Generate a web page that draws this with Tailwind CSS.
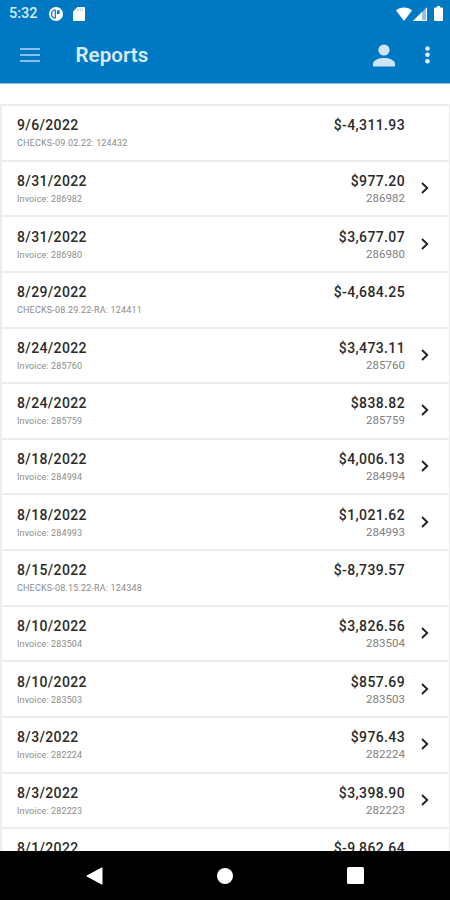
<!DOCTYPE html>
<html lang="en">
<head>
<meta charset="utf-8">
<title>Reports</title>
<script src="https://cdn.jsdelivr.net/npm/@tailwindcss/browser@4"></script>
</head>
<body class="bg-white font-[Roboto,sans-serif]">
<div class="w-[450px] h-[900px] flex flex-col overflow-hidden bg-white">
  <header class="h-[84px] shrink-0 bg-[#0079c4] border-b border-[#8fc0e4]">
    <div class="h-[27px] flex items-center pl-[9px] pr-[7px] text-white">
      <span class="w-[40px] text-[14.5px] leading-[27px] font-medium text-[#d9ebfa]">5:32</span>
      <svg class="w-[14px] h-[14px]" viewBox="0 0 14 14"><circle cx="7" cy="7" r="7" fill="#fff"/><path d="M6.300 3C3.800 3 2.600 5 2.600 7s1.200 4 3.700 4z" fill="none" stroke="#0079c4" stroke-width="1.200"/><path d="M8 3.300h2.600V7H8z" fill="#0079c4"/></svg>
      <svg class="ml-[10px] w-[12px] h-[14px]" viewBox="0 0 12 14"><path d="M4.500 0H11a1 1 0 0 1 1 1v12a1 1 0 0 1-1 1H1a1 1 0 0 1-1-1V4.500z" fill="#fff"/><path d="M5 1.500V4M7.300 1.500V4M9.600 1.500V4" stroke="#0079c4" stroke-opacity=".4" stroke-width="1"/></svg>
      <div class="ml-auto flex items-center">
        <svg class="w-[16px] h-[14px]" viewBox="0 0 16 14"><path d="M8 14 0 3.400C2 1.500 4.800 .4 8 .4s6 1.100 8 3z" fill="#fff"/></svg>
        <svg class="ml-[1px] w-[14px] h-[14px]" viewBox="0 0 14 14"><path d="M14 0v14H0z" fill="#fff" fill-opacity=".55"/><path d="M9 5v9H0z" fill="#fff"/><path d="M13.500 1v12.500H.8" fill="none" stroke="#fff"/></svg>
        <svg class="ml-[7px] w-[9px] h-[15px]" viewBox="0 0 9 15"><path d="M3 0h3v1.500h2a1 1 0 0 1 1 1V14a1 1 0 0 1-1 1H1a1 1 0 0 1-1-1V2.500a1 1 0 0 1 1-1h2z" fill="#fff"/></svg>
      </div>
    </div>
    <div class="h-[56px] flex items-center pl-5 pr-[20px]">
      <svg class="w-[20px] h-[14px]" viewBox="0 0 20 14"><path d="M0 1h20M0 7h20M0 13h20" stroke="#86c1e9" stroke-width="1.800"/></svg>
      <h1 class="ml-[35.500px] text-[20.500px] leading-[28px] font-semibold text-[#d9ebfa] tracking-[0.05px]">Reports</h1>
      <svg class="ml-auto w-[22px] h-[23px]" viewBox="0 0 22 23"><circle cx="11" cy="6" r="5.600" fill="#cfe4f7"/><path d="M0 22.500v-2.700C0 16 6.500 14 11 14s11 2 11 5.800v2.700z" fill="#cfe4f7"/></svg>
      <svg class="ml-[30px] w-[5px] h-[18px]" viewBox="0 0 5 18"><g fill="#e4f1fb"><circle cx="2.500" cy="2.500" r="2.300"/><circle cx="2.500" cy="8.800" r="2.300"/><circle cx="2.500" cy="15.200" r="2.300"/></g></svg>
    </div>
  </header>
  <main class="flex-1 min-h-0 overflow-hidden pt-[20px]">
    <ul id="list" class="border-l-2 border-r border-[#ededed]"></ul>
  </main>
  <nav class="h-[49px] shrink-0 bg-black flex items-center pl-[86px] pr-[86px] justify-between">
    <svg class="w-[17px] h-[18px]" viewBox="0 0 17 18"><path d="M16 .8v16.400L.8 9z" fill="#fff" stroke="#fff" stroke-linejoin="round"/></svg>
    <span class="w-[16px] h-[16px] rounded-full bg-white"></span>
    <span class="w-[17px] h-[17px] rounded-[1.5px] bg-white"></span>
  </nav>
</div>
<script>
const rows = [
  ["9/6/2022", "CHECKS-09.02.22: 124432", "$-4,311.93", ""],
  ["8/31/2022", "Invoice: 286982", "$977.20", "286982"],
  ["8/31/2022", "Invoice: 286980", "$3,677.07", "286980"],
  ["8/29/2022", "CHECKS-08.29.22-RA: 124411", "$-4,684.25", ""],
  ["8/24/2022", "Invoice: 285760", "$3,473.11", "285760"],
  ["8/24/2022", "Invoice: 285759", "$838.82", "285759"],
  ["8/18/2022", "Invoice: 284994", "$4,006.13", "284994"],
  ["8/18/2022", "Invoice: 284993", "$1,021.62", "284993"],
  ["8/15/2022", "CHECKS-08.15.22-RA: 124348", "$-8,739.57", ""],
  ["8/10/2022", "Invoice: 283504", "$3,826.56", "283504"],
  ["8/10/2022", "Invoice: 283503", "$857.69", "283503"],
  ["8/3/2022", "Invoice: 282224", "$976.43", "282224"],
  ["8/3/2022", "Invoice: 282223", "$3,398.90", "282223"],
  ["8/1/2022", "", "$-9,862.64", ""]
];
const chevron = '<svg class="w-[8px] h-[12px]" viewBox="0 0 8 12"><path d="M1 1 6.200 6 1 11" fill="none" stroke="#222" stroke-width="1.900"/></svg>';
document.getElementById("list").innerHTML = rows.map(([date, note, amount, ref]) => `
  <li class="h-[55.63px] flex border-t-2 border-[#ededed] pl-[15px] pt-[10.3px]">
    <div class="flex-1">
      <p class="text-[14px] leading-[19px] font-medium tracking-[0.36px] text-[#2b2b2b]">${date}</p>
      <p class="text-[9px] leading-[16px] text-[#8c8c8c] ${note.startsWith("CHECKS") ? "tracking-[0.17px]" : "tracking-[0.13px]"}">${note}</p>
    </div>
    <div class="text-right">
      <p class="text-[14px] leading-[19px] font-medium tracking-[0.38px] text-[#2b2b2b]">${amount}</p>
      <p class="text-[11.5px] leading-[14px] tracking-[0.05px] text-[#808080]">${ref}</p>
    </div>
    <div class="w-[44px] pl-[15.5px] pt-[10px]">${ref ? chevron : ""}</div>
  </li>`).join("");
</script>
</body>
</html>
